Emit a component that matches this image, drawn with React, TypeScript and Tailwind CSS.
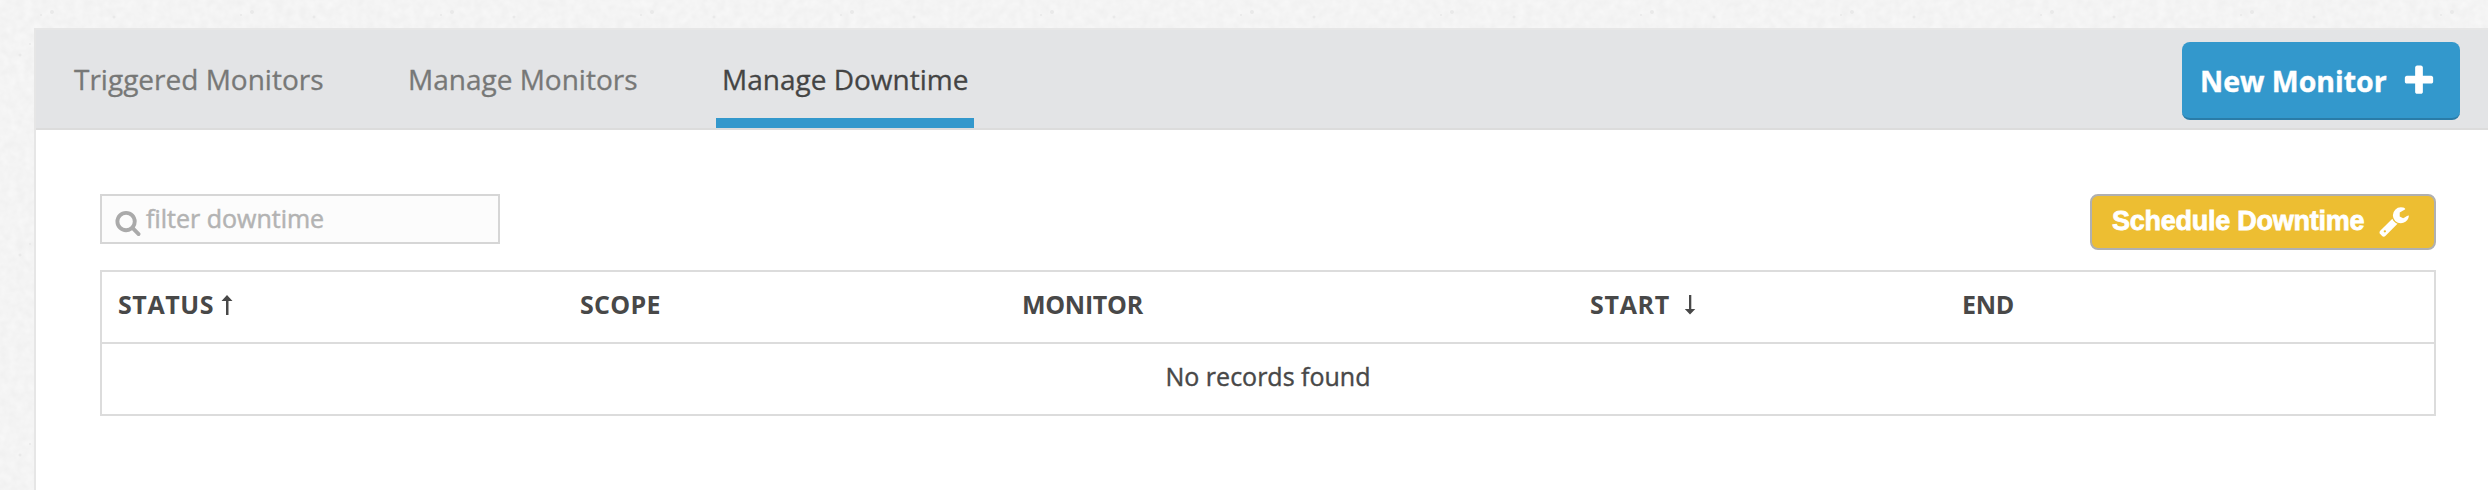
import type { ReactNode } from "react";

const PLUS =
  "M1600 736v192q0 40-28 68t-68 28h-416v416q0 40-28 68t-68 28h-192q-40 0-68-28t-28-68v-416h-416q-40 0-68-28t-28-68v-192q0-40 28-68t68-28h416v-416q0-40 28-68t68-28h192q40 0 68 28t28 68v416h416q40 0 68 28t28 68z";
const WRENCH =
  "M448 1472q0-26-19-45t-45-19-45 19-19 45 19 45 45 19 45-19 19-45zm644-420l-682 682q-37 37-90 37-52 0-91-37l-106-108q-38-36-38-90 0-53 38-91l681-681q39 98 114.5 173.5t173.5 114.5zm634-435q0 39-23 106-47 134-164.5 217.5t-258.5 83.5q-185 0-316.5-131.5t-131.5-316.5 131.5-316.5 316.5-131.5q58 0 121.5 16.5t107.5 46.5q16 11 16 28t-16 28l-293 169v224l193 107q5-3 79-48.5t135.5-81 70.5-35.5q15 0 23.5 10t8.500 25z";
const SEARCH =
  "M1216 832q0-185-131.5-316.5t-316.5-131.5-316.5 131.5-131.5 316.5 131.5 316.5 316.5 131.5 316.5-131.5 131.5-316.5zm512 832q0 52-38 90t-90 38q-54 0-90-38l-343-342q-179 124-399 124-143 0-273.5-55.5t-225-150-150-225-55.5-273.5 55.5-273.5 150-225 225-150 273.5-55.5 273.5 55.5 225 150 150 225 55.5 273.5q0 220-124 399l343 343q37 37 37 90z";

function Icon({ d, className }: { d: string; className: string }) {
  return (
    <svg viewBox="0 0 1792 1792" fill="currentColor" className={className} aria-hidden="true">
      <path d={d} />
    </svg>
  );
}

function Arrow({ down, className }: { down?: boolean; className: string }) {
  return (
    <svg viewBox="0 0 12 20" fill="currentColor" className={className} aria-hidden="true">
      <path d={down ? "M5 0h2.300v14h4L6 19.500L0.800 14H5z" : "M6 0L11.500 6H7.500v14H5V6H0.500z"} />
    </svg>
  );
}

function Paper() {
  return (
    <svg className="absolute inset-0 h-full w-full" aria-hidden="true">
      <filter id="grain" x="0" y="0" width="100%" height="100%" colorInterpolationFilters="sRGB">
        <feTurbulence type="fractalNoise" baseFrequency="0.12" numOctaves="2" seed="4" />
        <feColorMatrix values="0.04 0 0 0 0.936  0.04 0 0 0 0.936  0.04 0 0 0 0.936  0 0 0 0 1" />
      </filter>
      <pattern id="specks" width="200" height="200" patternUnits="userSpaceOnUse">
        <g fill="#e9e9e9">
          <circle cx="52" cy="12" r="2" />
          <circle cx="114" cy="17" r="1.5" />
          <circle cx="41" cy="15" r="1" />
          <circle cx="20" cy="55" r="1.5" />
          <circle cx="30" cy="44" r="1" />
        </g>
      </pattern>
      <rect width="100%" height="100%" filter="url(#grain)" />
      <rect width="100%" height="100%" fill="url(#specks)" />
    </svg>
  );
}

function Tab({ children, active, className }: { children: ReactNode; active?: boolean; className: string }) {
  return (
    <a
      className={
        "flex h-[98px] items-center border-b-10 pt-[10px] text-[28px] whitespace-nowrap [-webkit-text-stroke:0.3px] " +
        (active ? "border-[#3398cc] text-[#444] " : "border-transparent text-[#777877] ") +
        className
      }
    >
      {children}
    </a>
  );
}

export default function App() {
  return (
    <div className="relative h-[490px] w-[2488px] overflow-hidden bg-[#f4f4f4] pt-7 pl-[34px] font-['Open_Sans',sans-serif] text-[#484848]">
      <Paper />
      <main className="relative h-[462px] border-t-2 border-l-2 border-[#e6e6e6] bg-white">
        <header className="flex h-[100px] items-start border-b-2 border-[#dcdcdc] bg-[#e3e4e6]">
          <nav className="flex flex-1">
            <Tab className="ml-[30px] w-[264px] pl-2">Triggered Monitors</Tab>
            <Tab className="ml-[70px] w-[244px] pl-2">Manage Monitors</Tab>
            <Tab active className="ml-[72px] w-[258px] pl-[6px]">
              Manage Downtime
            </Tab>
          </nav>
          <button className="mt-3 mr-7 flex h-[78px] w-[278px] items-center rounded-lg border-b-2 border-[#2a7ca8] bg-[#3398cc] pl-[18px] text-left text-[28.5px] font-bold whitespace-nowrap text-white [-webkit-text-stroke:0.4px]">
            <span className="w-[201px] pt-[2px]">New Monitor</span>
            <Icon d={PLUS} className="mt-[2px] h-9 w-9" />
          </button>
        </header>

        <section className="pt-16 pr-[52px] pl-16">
          <div className="flex h-[76px] items-start justify-between">
            <label className="flex h-[50px] w-[400px] items-center border-2 border-[#d6d6d6] bg-[#fcfcfc] pl-3 text-[#b3b3b3]">
              <Icon d={SEARCH} className="mt-[7px] h-[27px] w-[28px] text-[#aaa]" />
              <span className="pl-1 text-[25px] [-webkit-text-stroke:0.5px]">filter downtime</span>
            </label>
            <button className="flex h-14 w-[346px] items-center rounded-lg border-2 border-[#b0b0b0] bg-[#edbe32] pb-[2px] pl-5 text-left font-['Liberation_Sans',sans-serif] text-[27px] font-bold tracking-[-0.25px] whitespace-nowrap text-white [-webkit-text-stroke:0.8px]">
              <span className="w-[266px]">Schedule Downtime</span>
              <Icon d={WRENCH} className="h-8 w-8" />
            </button>
          </div>

          <table className="h-[146px] w-[2336px] table-fixed border-collapse border-2 border-[#dcdcdc] text-[25px]">
            <thead>
              <tr className="h-[72px] border-b-2 border-[#dcdcdc] text-left">
                <th className="w-[462px] pb-1 pl-4">
                  <span className="flex items-center tracking-[0.6px]">
                    STATUS
                    <Arrow className="ml-[7px] h-5 w-3" />
                  </span>
                </th>
                <th className="w-[443px] pb-1 pl-[17px] tracking-[0.3px]">SCOPE</th>
                <th className="w-[568px] pb-1 pl-4 tracking-[-0.3px]">MONITOR</th>
                <th className="w-[373px] pb-1 pl-4">
                  <span className="flex items-center tracking-[0.7px]">
                    START
                    <Arrow down className="ml-[14px] h-5 w-3" />
                  </span>
                </th>
                <th className="pb-1 pl-[15px] tracking-[-0.3px]">END</th>
              </tr>
            </thead>
            <tbody>
              <tr className="h-[72px] text-center">
                <td colSpan={5} className="pb-1 [-webkit-text-stroke:0.4px]">
                  No records found
                </td>
              </tr>
            </tbody>
          </table>
        </section>
      </main>
    </div>
  );
}
